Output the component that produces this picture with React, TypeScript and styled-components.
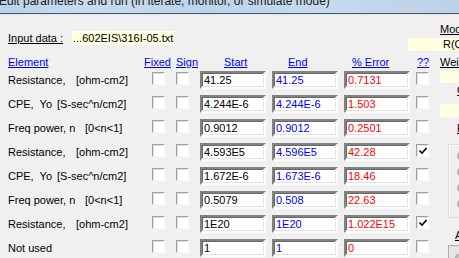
import styled, {createGlobalStyle, css} from "styled-components";

const GlobalStyle = createGlobalStyle`
  html, body {
    margin: 0;
    padding: 0;
    background: #f0f0f0;
  }
`;

const StyledWindow = styled.div`
  width: 459px;
  height: 258px;
  overflow: hidden;
  background: #f0f0f0;
  font-family: "Liberation Sans", Arial, sans-serif;
  font-size: 11px;
  color: #000000;
  display: flex;
  flex-direction: column;
`;

const StyledTitleBar = styled.div`
  height: 13px;
  flex-shrink: 0;
  background: linear-gradient(90deg, #bcd2ea 0%, #c9dcef 20%, #bdd3ea 45%, #c6daee 70%, #c2d3e6 90%, #bcd2ea 100%);
  border-bottom: 1px solid #44566b;
  box-shadow: 0 1px 0 #dfe8f2;
  overflow: hidden;
`;

const StyledTitle = styled.div`
  font-size: 12px;
  line-height: 12px;
  margin: -5px 0 0 -1px;
  white-space: nowrap;
  color: #1a1a1a;
`;

const StyledTopRow = styled.div`
  display: flex;
  height: 38px;
  flex-shrink: 0;
  margin-top: 1px;
`;

const StyledInputRow = styled.div`
  display: flex;
  align-items: center;
  padding: 16px 0 0 8px;
  height: 14px;
`;

const StyledUnderlined = styled.span<{ $width?: number }>`
  text-decoration: underline;
  line-height: 14px;
  white-space: pre;
  ${props => props.$width && css`
    display: inline-block;
    width: ${props.$width}px;
    flex-shrink: 0;
  `}
`;

const StyledYellow = styled.div<{ $height?: number, $top?: number, $indent?: number }>`
  background: #ffffe1;
  height: ${props => props.$height || 13}px;
  line-height: ${props => props.$height || 13}px;
  margin-top: ${props => props.$top || 0}px;
  padding: 0 1px 0 ${props => props.$indent || 1}px;
  white-space: nowrap;
  overflow: hidden;
`;

const StyledSideTop = styled.div`
  margin-left: auto;
  width: 51px;
  display: flex;
  flex-direction: column;
  padding-top: 7px;
`;

const StyledTableArea = styled.div`
  display: flex;
`;

const StyledMain = styled.div`
  width: 440px;
  flex-shrink: 0;
  display: flex;
  flex-direction: column;
`;

const StyledHeader = styled.div`
  display: flex;
  height: 14px;
  line-height: 14px;
  margin-top: 2px;
  padding-left: 8px;
`;

const StyledHeaderLink = styled.span<{ $width: number }>`
  width: ${props => props.$width}px;
  flex-shrink: 0;
  color: #0000ff;
  text-decoration: underline;
  white-space: nowrap;
`;

const StyledRows = styled.div`
  display: flex;
  flex-direction: column;
  margin-top: 2px;
`;

const StyledRow = styled.div`
  display: grid;
  grid-template-columns: 144px 24px 24px 72px 72px 72px 24px;
  height: 24px;
  padding-left: 8px;
  align-items: start;
`;

const StyledLabel = styled.div`
  line-height: 18px;
  white-space: pre;
  display: flex;
`;

const StyledName = styled.span<{ $width: number }>`
  width: ${props => props.$width}px;
  flex-shrink: 0;
`;

const StyledCheckbox = styled.div<{ $checked?: boolean }>`
  width: 11px;
  height: 11px;
  margin-top: 1px;
  background: #ffffff;
  border: 1px solid;
  border-color: #a0a0a0 #ffffff #ffffff #a0a0a0;
  box-shadow: inset 1px 1px 0 #e3e3e3;
  position: relative;
  ${props => props.$checked && css`
    svg {
      position: absolute;
      left: 2px;
      top: 2px;
    }
  `}
`;

const StyledField = styled.div<{ $color: string }>`
  width: 60px;
  height: 14px;
  background: #ffffff;
  border: 2px solid;
  border-color: #828282 #ffffff #ffffff #828282;
  box-shadow: inset -1px -1px 0 #e3e3e3, inset 1px 1px 0 #696969;
  color: ${props => props.$color};
  line-height: 15px;
  padding-left: 2px;
  white-space: nowrap;
  overflow: hidden;
`;

const StyledSide = styled.div`
  display: flex;
  flex-direction: column;
  width: 40px;
  flex-shrink: 0;
`;

const StyledSideLabel = styled(StyledUnderlined)<{ $indent?: number, $top?: number }>`
  display: block;
  margin-left: ${props => props.$indent || 0}px;
  margin-top: ${props => props.$top || 0}px;
`;

const StyledGroupBox = styled.div<{ $height: number, $top: number }>`
  margin: ${props => props.$top}px 0 0 8px;
  height: ${props => props.$height}px;
  border: 1px solid #d5dfe5;
  border-right: none;
  box-shadow: inset 1px 1px 0 #ffffff;
  border-radius: 2px 0 0 2px;
  display: flex;
  flex-direction: column;
  padding: 7px 0 0 8px;
  gap: 8px;
`;

const StyledRadio = styled.div`
  width: 8px;
  height: 8px;
  border-radius: 50%;
  background: radial-gradient(circle at 40% 40%, #c8c8c8 0%, #8a8a8a 100%);
`;

const StyledButtonBox = styled.div`
  margin: 3px 0 0 8px;
  height: 30px;
  border: 1px solid #adadad;
  border-right: none;
  background: #e5e5e5;
  padding: 8px 0 0 6px;
`;

const Check = () => (
    <svg width="8" height="8" viewBox="0 0 8 8">
        <path d="M0.5 3.5 L3 6 L7.5 1" fill="none" stroke="#000000" strokeWidth="1.6"/>
    </svg>
);

type Param = {
    name: string;
    nameWidth: number;
    unit: string;
    start: string;
    end: string;
    error: string;
    flag: boolean;
};

const params: Param[] = [
    {name: "Resistance,", nameWidth: 68, unit: "[ohm-cm2]", start: "41.25", end: "41.25", error: "0.7131", flag: false},
    {name: "CPE,  Yo", nameWidth: 49, unit: "[S-sec^n/cm2]", start: "4.244E-6", end: "4.244E-6", error: "1.503", flag: false},
    {name: "Freq power, n", nameWidth: 77, unit: "[0<n<1]", start: "0.9012", end: "0.9012", error: "0.2501", flag: false},
    {name: "Resistance,", nameWidth: 68, unit: "[ohm-cm2]", start: "4.593E5", end: "4.596E5", error: "42.28", flag: true},
    {name: "CPE,  Yo", nameWidth: 49, unit: "[S-sec^n/cm2]", start: "1.672E-6", end: "1.673E-6", error: "18.46", flag: false},
    {name: "Freq power, n", nameWidth: 77, unit: "[0<n<1]", start: "0.5079", end: "0.508", error: "22.63", flag: false},
    {name: "Resistance,", nameWidth: 68, unit: "[ohm-cm2]", start: "1E20", end: "1E20", error: "1.022E15", flag: true},
    {name: "Not used", nameWidth: 68, unit: "", start: "1", end: "1", error: "0", flag: false},
];

export default function App() {
    return (
        <StyledWindow>
            <GlobalStyle/>
            <StyledTitleBar>
                <StyledTitle>Edit parameters and run (in iterate, monitor, or simulate mode)</StyledTitle>
            </StyledTitleBar>
            <StyledTopRow>
                <StyledInputRow>
                    <StyledUnderlined $width={64}>Input data :</StyledUnderlined>
                    <StyledYellow $height={14}>...602EIS\316I-05.txt</StyledYellow>
                </StyledInputRow>
                <StyledSideTop>
                    <StyledSideLabel $indent={32}>Model</StyledSideLabel>
                    <StyledYellow $height={13} $top={2} $indent={35}>R(Q)</StyledYellow>
                </StyledSideTop>
            </StyledTopRow>
            <StyledTableArea>
                <StyledMain>
                    <StyledHeader>
                        <StyledHeaderLink $width={136}>Element</StyledHeaderLink>
                        <StyledHeaderLink $width={32}>Fixed</StyledHeaderLink>
                        <StyledHeaderLink $width={48}>Sign</StyledHeaderLink>
                        <StyledHeaderLink $width={64}>Start</StyledHeaderLink>
                        <StyledHeaderLink $width={64}>End</StyledHeaderLink>
                        <StyledHeaderLink $width={65}>% Error</StyledHeaderLink>
                        <StyledHeaderLink $width={23}>??</StyledHeaderLink>
                    </StyledHeader>
                    <StyledRows>
                        {params.map((p, i) => (
                            <StyledRow key={i}>
                                <StyledLabel>
                                    <StyledName $width={p.nameWidth}>{p.name}</StyledName>
                                    <span>{p.unit}</span>
                                </StyledLabel>
                                <StyledCheckbox/>
                                <StyledCheckbox/>
                                <StyledField $color="#000000">{p.start}</StyledField>
                                <StyledField $color="#0000ff">{p.end}</StyledField>
                                <StyledField $color="#ff0000">{p.error}</StyledField>
                                <StyledCheckbox $checked={p.flag}>{p.flag && <Check/>}</StyledCheckbox>
                            </StyledRow>
                        ))}
                    </StyledRows>
                </StyledMain>
                <StyledSide>
                    <StyledSideLabel $top={2}>Weighting</StyledSideLabel>
                    <StyledYellow $height={12} $top={2}/>
                    <StyledSideLabel $indent={17}>Calc</StyledSideLabel>
                    <StyledYellow $height={13} $top={7}/>
                    <StyledSideLabel $indent={17} $top={4}>Fit</StyledSideLabel>
                    <StyledGroupBox $top={9} $height={65}>
                        <StyledRadio/>
                        <StyledRadio/>
                        <StyledRadio/>
                        <StyledRadio/>
                    </StyledGroupBox>
                    <StyledSideLabel $indent={15} $top={10}>Auto</StyledSideLabel>
                    <StyledButtonBox>
                        <StyledRadio/>
                    </StyledButtonBox>
                </StyledSide>
            </StyledTableArea>
        </StyledWindow>
    );
}
